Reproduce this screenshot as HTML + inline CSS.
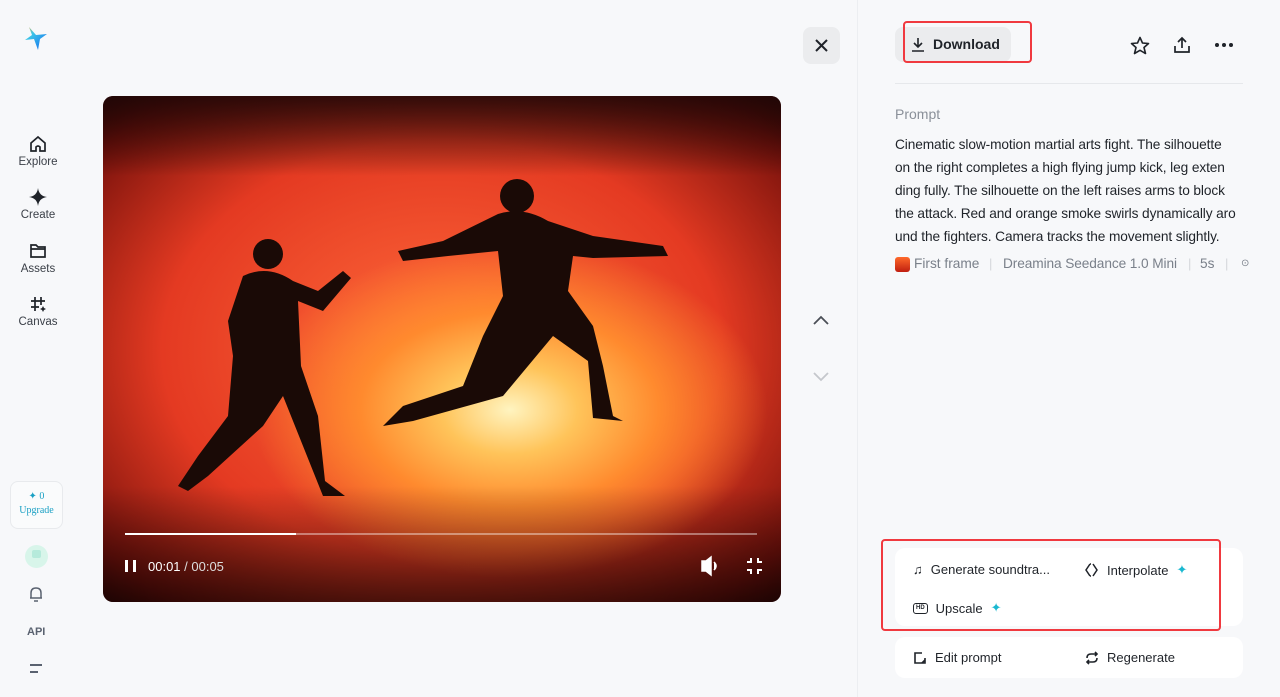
<!DOCTYPE html>
<html><head><meta charset="utf-8"><style>
*{box-sizing:border-box;margin:0;padding:0}
body{width:1280px;height:697px;overflow:hidden;background:#f7f8fa;font-family:"Liberation Sans",sans-serif;color:#1f2329;position:relative}
.abs{position:absolute}
.nav{position:absolute;left:0;width:76px;text-align:center;font-size:11.5px;color:#3a3f47}
.nav svg{display:block;margin:0 auto 2px}
.video{left:103px;top:96px;width:678px;height:506px;border-radius:10px;overflow:hidden;
background:radial-gradient(ellipse 40% 35% at 60% 62%,#fff4c0 0%,#ffc45a 25%,#ff8a2e 55%,rgba(255,90,30,0) 95%),radial-gradient(ellipse 75% 75% at 50% 50%,#ff6a3a,#e43a22 55%,#7a120c 85%,#2a0404 100%)}
.row{display:flex;align-items:center;gap:8px;font-size:13px;color:#1f2329}
.p div{white-space:nowrap}
</style></head><body>
<svg class="abs" style="left:24px;top:26px" width="24" height="26" viewBox="0 0 24 26"><defs><linearGradient id="g" x1="0" y1="0" x2="1" y2="1"><stop offset="0" stop-color="#f5b13d"/><stop offset=".3" stop-color="#3cc6e8"/><stop offset="1" stop-color="#1266f0"/></linearGradient></defs><path d="M5 1 L8 9 L1 14 L10 13 L14 24 L16 13 L23 8 L12 9 Z" fill="url(#g)"/></svg>

<div class="nav" style="top:134px"><svg width="20" height="20" viewBox="0 0 20 20" fill="none" stroke="#1f2329" stroke-width="1.7"><path d="M3 9 L10 3 L17 9 V17 H12 V13 Q10 11 8 13 V17 H3 Z"/></svg>Explore</div>
<div class="nav" style="top:187px"><svg width="20" height="20" viewBox="0 0 20 20"><path d="M10 1 Q11 9 19 10 Q11 11 10 19 Q9 11 1 10 Q9 9 10 1Z" fill="#1f2329"/></svg>Create</div>
<div class="nav" style="top:241px"><svg width="20" height="20" viewBox="0 0 20 20" fill="none" stroke="#1f2329" stroke-width="1.7"><path d="M3 4 H8 L10 6 H17 V16 H3 Z M3 8 H17"/></svg>Assets</div>
<div class="nav" style="top:294px"><svg width="20" height="20" viewBox="0 0 20 20" fill="none" stroke="#1f2329" stroke-width="1.7"><path d="M7 3 V17 M13 3 V11 M3 7 H17 M3 13 H11"/><path d="M15 12 L16 14 L18 15 L16 16 L15 18 L14 16 L12 15 L14 14Z" fill="#1f2329" stroke="none"/></svg>Canvas</div>

<div class="abs" style="left:10px;top:481px;width:53px;height:48px;border:1px solid #e8eaed;border-radius:8px;background:#fafbfc;text-align:center;color:#1aa0c4;font-family:'Liberation Serif',serif;font-size:10px;line-height:14px;padding-top:8px">✦ 0<br>Upgrade</div>
<div class="abs" style="left:25px;top:545px;width:23px;height:23px;border-radius:50%;background:#d8f5ea"><div style="margin:5px auto 0;width:9px;height:8px;background:#b6eadb;border-radius:2px"></div></div>
<svg class="abs" style="left:27px;top:585px" width="18" height="18" viewBox="0 0 18 18" fill="none" stroke="#5a6270" stroke-width="1.5"><path d="M4 13 V8 Q4 3 9 3 Q14 3 14 8 V13 H3 H15 M7 16 H11"/></svg>
<div class="abs" style="left:27px;top:626px;font-size:11px;font-weight:bold;color:#5a6270">API</div>
<div class="abs" style="left:30px;top:664px;width:12px;height:2px;background:#5a6270"></div>
<div class="abs" style="left:30px;top:671px;width:8px;height:2px;background:#5a6270"></div>

<div class="abs video">
<svg width="678" height="506" viewBox="0 0 678 506" style="position:absolute;left:0;top:0">
<defs><linearGradient id="fl" x1="0" y1="0" x2="0" y2="1"><stop offset="0" stop-color="#000" stop-opacity="0"/><stop offset="1" stop-color="#000" stop-opacity=".6"/></linearGradient>
<linearGradient id="tp" x1="0" y1="0" x2="0" y2="1"><stop offset="0" stop-color="#1a0606" stop-opacity=".85"/><stop offset="1" stop-color="#000" stop-opacity="0"/></linearGradient></defs>
<rect width="678" height="80" fill="url(#tp)"/>
<rect y="390" width="678" height="116" fill="url(#fl)"/>
<g fill="#1a0a06">
<circle cx="165" cy="158" r="15"/><path d="M140 180 Q165 168 190 185 L215 195 L240 175 L248 182 L220 215 L195 205 L198 270 L215 320 L222 385 L242 400 L220 400 L200 350 L180 300 L160 330 L105 380 L85 395 L75 390 L95 360 L125 320 L130 260 L125 225 Z"/>
<circle cx="414" cy="100" r="17"/><path d="M395 118 Q420 110 445 125 L490 140 L560 150 L565 160 L490 162 L470 160 L465 195 L490 230 L500 270 L510 320 L520 325 L490 322 L485 265 L450 240 L400 300 L310 325 L280 330 L300 310 L360 290 L380 240 L400 200 L395 155 L345 160 L300 165 L295 155 L340 145 Z"/>
</g>
<rect x="22" y="437" width="632" height="2" fill="rgba(255,255,255,.4)"/>
<rect x="22" y="437" width="171" height="2" fill="#fff"/>
<rect x="22" y="464" width="3" height="12" fill="#fff"/><rect x="30" y="464" width="3" height="12" fill="#fff"/>
<text x="45" y="475" font-size="13" fill="#fff" font-family="Liberation Sans">00:01 <tspan fill="#ddd">/ 00:05</tspan></text>
<path d="M599 465 H603 L608 461 V479 L603 475 H599Z M611 466 Q615 470 611 474" fill="#fff" stroke="#fff" stroke-width="1.5"/>
<path d="M644 466 H648 V462 M655 462 V466 H659 M644 474 H648 V478 M655 478 V474 H659" fill="none" stroke="#fff" stroke-width="2"/>
</svg></div>

<div class="abs" style="left:803px;top:27px;width:37px;height:37px;border-radius:8px;background:#ebecee"></div>
<svg class="abs" style="left:814px;top:38px" width="15" height="15" viewBox="0 0 15 15" stroke="#1f2329" stroke-width="2"><path d="M2 2 L13 13 M13 2 L2 13"/></svg>
<svg class="abs" style="left:812px;top:315px" width="18" height="12" viewBox="0 0 18 12" fill="none" stroke="#4a4f57" stroke-width="1.8"><path d="M2 9 L9 2 L16 9"/></svg>
<svg class="abs" style="left:812px;top:370px" width="18" height="12" viewBox="0 0 18 12" fill="none" stroke="#c4c7cc" stroke-width="1.8"><path d="M2 3 L9 10 L16 3"/></svg>
<div class="abs" style="left:857px;top:0;width:1px;height:697px;background:#eceef1"></div>

<div class="abs" style="left:895px;top:27px;width:116px;height:35px;border-radius:8px;background:#ebecee"></div>
<div class="abs" style="left:903px;top:21px;width:129px;height:42px;border:2px solid #f0393f;border-radius:4px"></div>
<div class="abs row" style="left:911px;top:36px;font-weight:bold;font-size:14px"><svg width="14" height="15" viewBox="0 0 14 15" fill="none" stroke="#1f2329" stroke-width="1.6"><path d="M7 1 V10 M3 6 L7 10 L11 6 M1 14 H13"/></svg>Download</div>
<svg class="abs" style="left:1130px;top:36px" width="20" height="19" viewBox="0 0 20 19" fill="none" stroke="#1f2329" stroke-width="1.6" stroke-linejoin="round"><path d="M10 1.5 L12.5 7 L18.5 7.5 L14 11.5 L15.5 17.5 L10 14.3 L4.5 17.5 L6 11.5 L1.5 7.5 L7.5 7Z"/></svg>
<svg class="abs" style="left:1173px;top:36px" width="18" height="18" viewBox="0 0 18 18" fill="none" stroke="#1f2329" stroke-width="1.7"><path d="M9 12 V2 M5 6 L9 2 L13 6 M2 10 V16 H16 V10"/></svg>
<div class="abs" style="left:1215px;top:43px;display:flex;gap:3px"><i style="width:4px;height:4px;border-radius:50%;background:#1f2329"></i><i style="width:4px;height:4px;border-radius:50%;background:#1f2329"></i><i style="width:4px;height:4px;border-radius:50%;background:#1f2329"></i></div>
<div class="abs" style="left:895px;top:83px;width:348px;height:1px;background:#e6e8eb"></div>

<div class="abs" style="left:895px;top:106px;font-size:14px;color:#8a9099">Prompt</div>
<div class="abs p" style="left:895px;top:133px;font-size:13.7px;line-height:23px;color:#1f2329;letter-spacing:-0.1px">
<div>Cinematic slow-motion martial arts fight. The silhouette</div>
<div>on the right completes a high flying jump kick, leg exten</div>
<div>ding fully. The silhouette on the left raises arms to block</div>
<div>the attack. Red and orange smoke swirls dynamically aro</div>
<div>und the fighters. Camera tracks the movement slightly.</div></div>
<div class="abs" style="left:895px;top:257px;width:15px;height:15px;border-radius:3px;background:linear-gradient(#ff6a2a,#c01e10)"></div>
<div class="abs" style="top:256px;left:914px;font-size:13.7px;color:#7a808a;white-space:nowrap">First frame</div>
<div class="abs" style="top:256px;left:989px;font-size:13px;color:#d5d8dc">|</div>
<div class="abs" style="top:256px;left:1003px;font-size:13.7px;color:#7a808a;white-space:nowrap;letter-spacing:-0.1px">Dreamina Seedance 1.0 Mini</div>
<div class="abs" style="top:256px;left:1188px;font-size:13px;color:#d5d8dc">|</div>
<div class="abs" style="top:256px;left:1200px;font-size:13.7px;color:#7a808a">5s</div>
<div class="abs" style="top:256px;left:1225px;font-size:13px;color:#d5d8dc">|</div>
<div class="abs" style="top:258px;left:1241px;font-size:10px;color:#7a808a">⊙</div>

<div class="abs" style="left:895px;top:548px;width:348px;height:78px;border-radius:10px;background:#fff"></div>
<div class="abs" style="left:881px;top:539px;width:340px;height:92px;border:2px solid #f0393f;border-radius:4px"></div>
<div class="abs row" style="left:913px;top:562px"><span style="font-size:13px">♫</span>Generate soundtra...</div>
<div class="abs row" style="left:1085px;top:562px"><svg width="14" height="14" viewBox="0 0 14 14" fill="none" stroke="#1f2329" stroke-width="1.5"><path d="M5 1 L1 7 L5 13 M8 1 L12 7 L8 13 M5 1 H6 M5 13 H6"/></svg>Interpolate <span style="color:#1ab8d0">✦</span></div>
<div class="abs row" style="left:913px;top:600px"><span style="border:1.5px solid #1f2329;border-radius:3px;font-size:6px;font-weight:bold;padding:0 2px;line-height:9px">HD</span>Upscale <span style="color:#1ab8d0">✦</span></div>
<div class="abs" style="left:895px;top:637px;width:348px;height:41px;border-radius:10px;background:#fff"></div>
<div class="abs row" style="left:913px;top:650px"><svg width="14" height="14" viewBox="0 0 14 14" fill="none" stroke="#1f2329" stroke-width="1.6"><path d="M12 7 V12 H2 V2 H9"/><path d="M9 12 L12 9" /></svg>Edit prompt</div>
<div class="abs row" style="left:1085px;top:650px"><svg width="14" height="14" viewBox="0 0 14 14" fill="none" stroke="#1f2329" stroke-width="1.6"><path d="M2 7 Q2 3 6 3 H12 M10 1 L12 3 L10 5 M12 7 Q12 11 8 11 H2 M4 9 L2 11 L4 13"/></svg>Regenerate</div>
</body></html>
